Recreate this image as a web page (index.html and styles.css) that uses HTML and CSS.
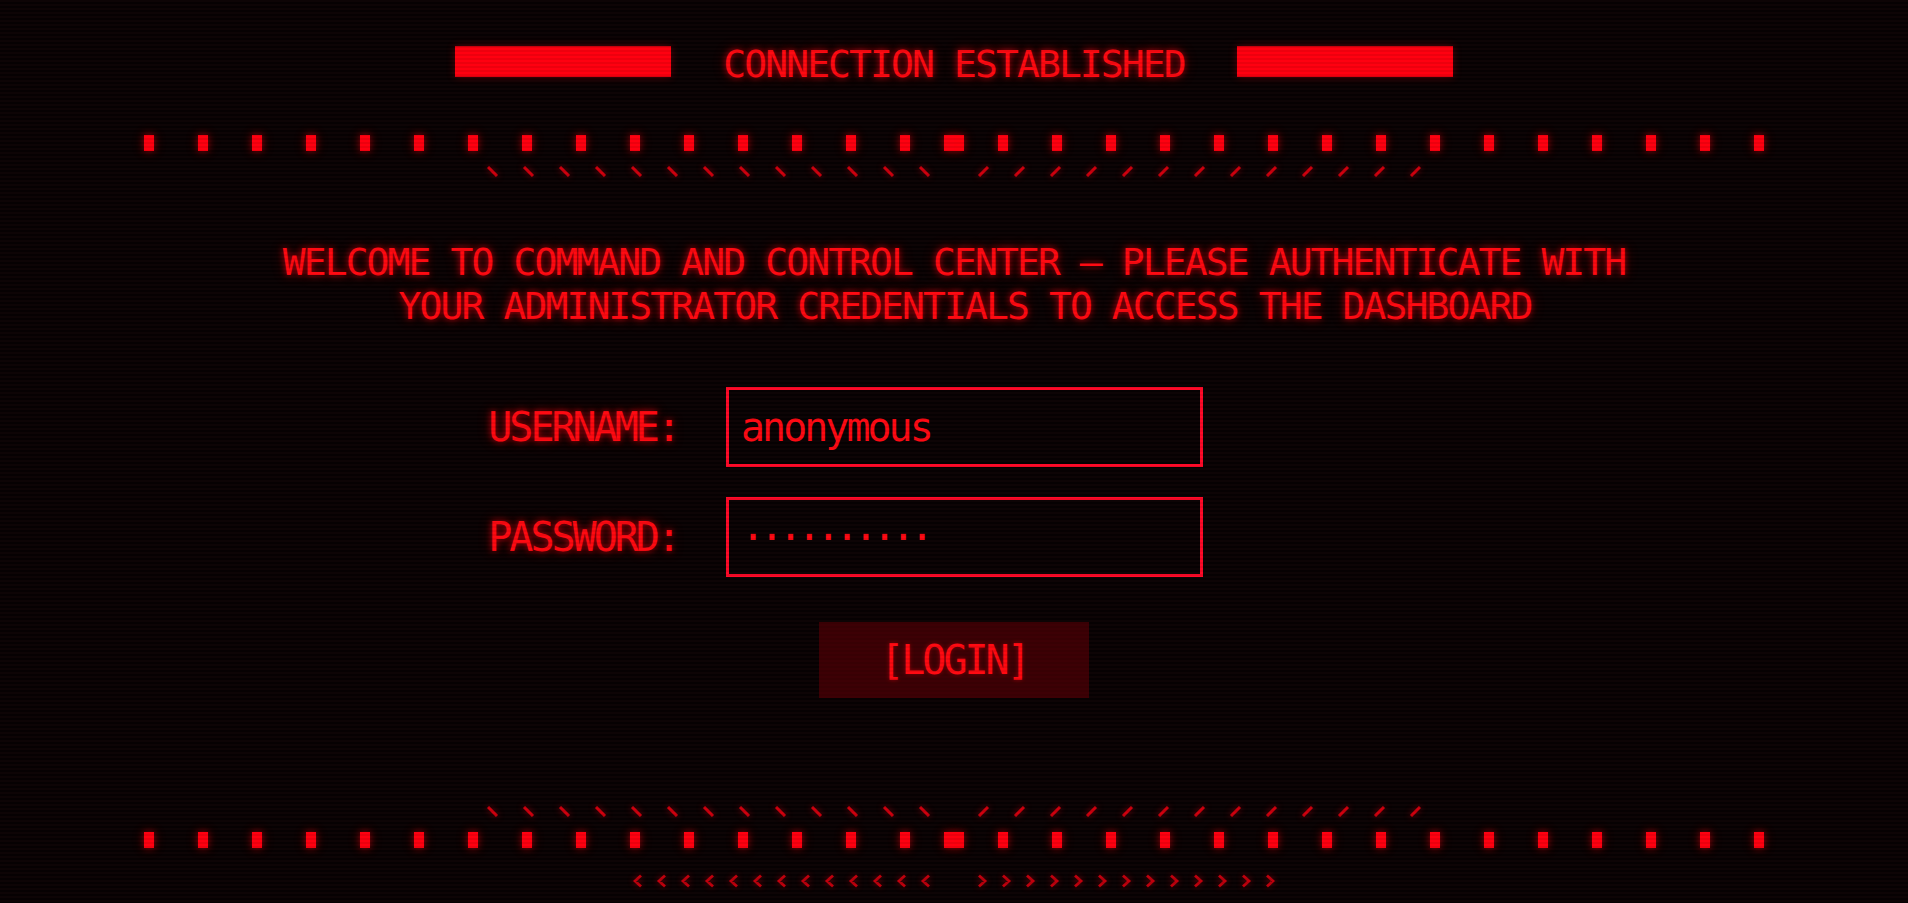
FILE: index.html
```html
<!DOCTYPE html>
<html lang="en">
<head>
<meta charset="utf-8">
<title>Command and Control Center</title>
<link rel="stylesheet" href="styles.css">
</head>
<body>
<div class="screen">
  <header class="status">
    <span class="bar"></span>
    <h1 class="status-text">CONNECTION ESTABLISHED</h1>
    <span class="bar"></span>
  </header>

  <div class="dots">
    <div class="dot-group"><i class="dot"></i><i class="dot"></i><i class="dot"></i><i class="dot"></i><i class="dot"></i><i class="dot"></i><i class="dot"></i><i class="dot"></i><i class="dot"></i><i class="dot"></i><i class="dot"></i><i class="dot"></i><i class="dot"></i><i class="dot"></i><i class="dot"></i><i class="dot"></i></div>
    <div class="dot-group"><i class="dot"></i><i class="dot"></i><i class="dot"></i><i class="dot"></i><i class="dot"></i><i class="dot"></i><i class="dot"></i><i class="dot"></i><i class="dot"></i><i class="dot"></i><i class="dot"></i><i class="dot"></i><i class="dot"></i><i class="dot"></i><i class="dot"></i><i class="dot"></i></div>
  </div>

  <svg class="slashes slashes-top" width="934" height="12" viewBox="0 0 934 12" aria-hidden="true">
    <path d="M1 1l9 9M37 1l9 9M73 1l9 9M109 1l9 9M145 1l9 9M181 1l9 9M217 1l9 9M253 1l9 9M289 1l9 9M325 1l9 9M361 1l9 9M397 1l9 9M433 1l9 9M492 10l9 -9M528 10l9 -9M564 10l9 -9M600 10l9 -9M636 10l9 -9M672 10l9 -9M708 10l9 -9M744 10l9 -9M780 10l9 -9M816 10l9 -9M852 10l9 -9M888 10l9 -9M924 10l9 -9"/>
  </svg>

  <p class="welcome"><span class="welcome-line">WELCOME TO COMMAND AND CONTROL CENTER — PLEASE AUTHENTICATE WITH</span> <span class="welcome-line welcome-line-2">YOUR ADMINISTRATOR CREDENTIALS TO ACCESS THE DASHBOARD</span></p>

  <form class="login" onsubmit="return false">
    <div class="fields">
      <label class="label" for="user">USERNAME:</label>
      <input class="field" id="user" type="text" value="anonymous">
      <label class="label" for="pass">PASSWORD:</label>
      <input class="field field-pass" id="pass" type="text" value="··········">
    </div>
    <div class="actions">
      <button class="login-btn" type="submit">[LOGIN]</button>
    </div>
  </form>

  <svg class="slashes slashes-bottom" width="934" height="12" viewBox="0 0 934 12" aria-hidden="true">
    <path d="M1 1l9 9M37 1l9 9M73 1l9 9M109 1l9 9M145 1l9 9M181 1l9 9M217 1l9 9M253 1l9 9M289 1l9 9M325 1l9 9M361 1l9 9M397 1l9 9M433 1l9 9M492 10l9 -9M528 10l9 -9M564 10l9 -9M600 10l9 -9M636 10l9 -9M672 10l9 -9M708 10l9 -9M744 10l9 -9M780 10l9 -9M816 10l9 -9M852 10l9 -9M888 10l9 -9M924 10l9 -9"/>
  </svg>

  <div class="dots dots-bottom">
    <div class="dot-group"><i class="dot"></i><i class="dot"></i><i class="dot"></i><i class="dot"></i><i class="dot"></i><i class="dot"></i><i class="dot"></i><i class="dot"></i><i class="dot"></i><i class="dot"></i><i class="dot"></i><i class="dot"></i><i class="dot"></i><i class="dot"></i><i class="dot"></i><i class="dot"></i></div>
    <div class="dot-group"><i class="dot"></i><i class="dot"></i><i class="dot"></i><i class="dot"></i><i class="dot"></i><i class="dot"></i><i class="dot"></i><i class="dot"></i><i class="dot"></i><i class="dot"></i><i class="dot"></i><i class="dot"></i><i class="dot"></i><i class="dot"></i><i class="dot"></i><i class="dot"></i></div>
  </div>

  <svg class="chevrons" width="642" height="14" viewBox="0 0 642 14" aria-hidden="true">
    <path d="M8 1.5L2 7L8 12.5M32 1.5L26 7L32 12.5M56 1.5L50 7L56 12.5M80 1.5L74 7L80 12.5M104 1.5L98 7L104 12.5M128 1.5L122 7L128 12.5M152 1.5L146 7L152 12.5M176 1.5L170 7L176 12.5M200 1.5L194 7L200 12.5M224 1.5L218 7L224 12.5M248 1.5L242 7L248 12.5M272 1.5L266 7L272 12.5M296 1.5L290 7L296 12.5M346 1.5L352 7L346 12.5M370 1.5L376 7L370 12.5M394 1.5L400 7L394 12.5M418 1.5L424 7L418 12.5M442 1.5L448 7L442 12.5M466 1.5L472 7L466 12.5M490 1.5L496 7L490 12.5M514 1.5L520 7L514 12.5M538 1.5L544 7L538 12.5M562 1.5L568 7L562 12.5M586 1.5L592 7L586 12.5M610 1.5L616 7L610 12.5M634 1.5L640 7L634 12.5"/>
  </svg>
</div>
</body>
</html>
```

FILE: styles.css
```css
* {
  box-sizing: border-box;
}

html,
body {
  margin: 0;
  padding: 0;
  height: 100%;
  overflow: hidden;
}

body {
  font-family: "DejaVu Sans Mono", monospace;
  color: #ff0a12;
  background-color: #080203;
  background-image: repeating-linear-gradient(
    to bottom,
    #0d0405 0px,
    #0d0405 2px,
    #070203 2px,
    #070203 4px
  );
}

.screen {
  position: relative;
  min-height: 100%;
  padding-top: 45px;
  display: flex;
  flex-direction: column;
  align-items: center;
}

.screen::after {
  content: "";
  position: fixed;
  inset: 0;
  pointer-events: none;
  background: repeating-linear-gradient(
    to bottom,
    rgba(0, 0, 0, 0) 0px,
    rgba(0, 0, 0, 0) 2px,
    rgba(0, 0, 0, 0.07) 2px,
    rgba(0, 0, 0, 0.07) 4px
  );
}

/* ---------- header ---------- */
.status {
  display: flex;
  align-items: flex-start;
  justify-content: center;
  gap: 52px;
}

.bar {
  display: block;
  width: 216px;
  height: 31px;
  margin-top: 1px;
  background: #ff0010;
  border-top: 1px solid #d6000e;
  border-bottom: 1px solid #d6000e;
  box-shadow: 0 0 8px rgba(255, 0, 16, 0.3);
}

.status-text {
  margin: 0;
  font-weight: normal;
  font-size: 38px;
  line-height: 38px;
  letter-spacing: -1.9px;
  white-space: nowrap;
  text-shadow: 0 0 6px rgba(255, 0, 16, 0.7), 0 0 14px rgba(255, 0, 16, 0.3);
}

/* ---------- dot rows ---------- */
.dots {
  display: flex;
  justify-content: center;
  margin-top: 52px;
}

.dots-bottom {
  margin-top: 14px;
}

.dot-group {
  display: flex;
  gap: 44px;
}

.dot-group + .dot-group {
  margin-left: -20px;
}

.dot {
  display: block;
  width: 10px;
  height: 16px;
  background: #ff0010;
  box-shadow: 0 0 7px rgba(255, 0, 16, 0.5), 0 0 14px rgba(255, 0, 16, 0.2);
}

/* ---------- slash / chevron rows ---------- */
.slashes {
  display: block;
  flex: none;
  fill: none;
  stroke: #d0000e;
  stroke-width: 3;
  filter: drop-shadow(0 0 3px rgba(255, 0, 16, 0.5));
}

.slashes-top {
  margin-top: 15px;
}

.slashes-bottom {
  margin-top: 108px;
}

.chevrons {
  display: block;
  flex: none;
  margin-top: 26px;
  fill: none;
  stroke: #c0000d;
  stroke-width: 2.8;
  stroke-linejoin: miter;
  filter: drop-shadow(0 0 3px rgba(255, 0, 16, 0.45));
}

/* ---------- welcome ---------- */
.welcome {
  margin: 62px 0 0;
  text-align: center;
  font-size: 38px;
  line-height: 44px;
  letter-spacing: -1.9px;
  text-shadow: 0 0 6px rgba(255, 0, 16, 0.7), 0 0 14px rgba(255, 0, 16, 0.3);
}

.welcome-line {
  display: block;
}

.welcome-line-2 {
  padding-left: 22px;
}

/* ---------- form ---------- */
.login {
  width: 100%;
  margin-top: 59px;
}

.fields {
  display: grid;
  grid-template-columns: 1fr 477px 1fr;
  padding-left: 21px;
  row-gap: 30px;
  align-items: center;
}

.label {
  grid-column: 1;
  justify-self: end;
  margin-right: 48px;
  font-size: 40px;
  line-height: 44px;
  letter-spacing: -3px;
  white-space: nowrap;
  text-shadow: 0 0 6px rgba(255, 0, 16, 0.7), 0 0 14px rgba(255, 0, 16, 0.3);
}

.field {
  grid-column: 2;
  width: 477px;
  height: 80px;
  margin: 0;
  padding: 0 0 0 12px;
  border: 3px solid #ff0a28;
  border-radius: 0;
  background: transparent;
  color: #ff0a14;
  font-family: "DejaVu Sans Mono", monospace;
  font-size: 40px;
  letter-spacing: -3px;
  outline: none;
}

.field-pass {
  letter-spacing: -5.3px;
}

.actions {
  display: flex;
  justify-content: center;
  margin-top: 45px;
}

.login-btn {
  width: 270px;
  height: 76px;
  margin: 0;
  padding: 0;
  border: none;
  background: #3d0005;
  color: #ff0a12;
  font-family: "DejaVu Sans Mono", monospace;
  font-size: 40px;
  letter-spacing: -3px;
  cursor: pointer;
  text-shadow: 0 0 4px rgba(255, 0, 16, 0.45);
}
```
